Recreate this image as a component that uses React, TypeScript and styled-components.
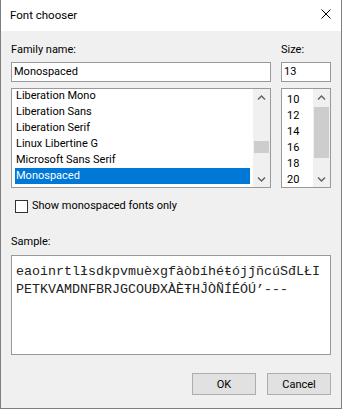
import styled, { createGlobalStyle } from "styled-components";

const families = [
  "Liberation Mono",
  "Liberation Sans",
  "Liberation Serif",
  "Linux Libertine G",
  "Microsoft Sans Serif",
  "Monospaced",
];

const sizes = ["10", "12", "14", "16", "18", "20"];

const GlobalStyle = createGlobalStyle`
  html, body {
    margin: 0;
    padding: 0;
    background: #f0f0f0;
  }
  * {
    box-sizing: border-box;
  }
`;

function Chevron({ down }: { down?: boolean }) {
  return (
    <svg width="9" height="6" viewBox="0 0 9 6">
      <path
        d={down ? "M1 1.5 L4.5 5 L8 1.5" : "M1 4.5 L4.5 1 L8 4.5"}
        fill="none"
        stroke="#606060"
        strokeWidth="1.4"
      />
    </svg>
  );
}

function ScrollBar({ thumbTop, thumbHeight }: { thumbTop: number; thumbHeight: number }) {
  return (
    <Bar>
      <Arrow>
        <Chevron />
      </Arrow>
      <Track>
        <Thumb style={{ top: thumbTop, height: thumbHeight }} />
      </Track>
      <Arrow>
        <Chevron down />
      </Arrow>
    </Bar>
  );
}

export default function App() {
  return (
    <>
      <GlobalStyle />
      <Window>
        <TitleBar>
          <Title>Font chooser</Title>
          <CloseIcon width="10" height="10" viewBox="0 0 10 10">
            <path d="M0.5 0.5 L9.5 9.5 M9.5 0.5 L0.5 9.5" stroke="#000" strokeWidth="1" />
          </CloseIcon>
        </TitleBar>
        <Body>
          <TopGrid>
            <Label>Family name:</Label>
            <Label>Size:</Label>
            <TextBox>Monospaced</TextBox>
            <TextBox>13</TextBox>
            <ListBox>
              <Items>
                {families.map((f) => (
                  <Item key={f} $selected={f === "Monospaced"}>
                    {f}
                  </Item>
                ))}
              </Items>
              <ScrollBar thumbTop={35} thumbHeight={12} />
            </ListBox>
            <ListBox>
              <SizeItems>
                {sizes.map((s) => (
                  <SizeItem key={s}>{s}</SizeItem>
                ))}
              </SizeItems>
              <ScrollBar thumbTop={1} thumbHeight={51} />
            </ListBox>
          </TopGrid>
          <CheckRow>
            <CheckBox />
            <span>Show monospaced fonts only</span>
          </CheckRow>
          <SampleLabel>Sample:</SampleLabel>
          <SampleBox>
            <SampleLine>eaoinrtlłsdkpvmuèxgfàòbíhéŧójĵñcúSđLŁI</SampleLine>
            <SampleLine>PETKVAMDNFBRJGCOUĐXÀÈŦHĴÒÑÍÉÓÚ’---</SampleLine>
          </SampleBox>
          <ButtonRow>
            <Button>OK</Button>
            <Button>Cancel</Button>
          </ButtonRow>
        </Body>
      </Window>
    </>
  );
}

const Window = styled.div`
  width: 342px;
  height: 409px;
  display: flex;
  flex-direction: column;
  background: #f0f0f0;
  border: 1px solid #7f7f7f;
  border-top: none;
  font-family: "Segoe UI", Roboto, "Noto Sans", sans-serif;
  font-size: 11px;
  color: #000;
`;

const TitleBar = styled.div`
  height: 31px;
  flex: none;
  background: #fff;
  display: flex;
  align-items: center;
  justify-content: space-between;
  padding: 0 10px 1px 9px;
`;

const Title = styled.div`
  font-size: 11.5px;
  line-height: 16px;
`;

const CloseIcon = styled.svg`
  display: block;
  margin-bottom: 2px;
`;

const Body = styled.div`
  flex: 1;
  display: flex;
  flex-direction: column;
  padding: 11px 10px 0 10px;
`;

const TopGrid = styled.div`
  display: grid;
  grid-template-columns: 260px 50px;
  column-gap: 10px;
`;

const Label = styled.div`
  height: 16px;
  line-height: 16px;
`;

const TextBox = styled.div`
  margin-top: 4px;
  height: 20px;
  line-height: 18px;
  padding-left: 2px;
  background: #fff;
  border: 1px solid #999;
`;

const ListBox = styled.div`
  margin-top: 6px;
  height: 100px;
  display: flex;
  background: #fff;
  border: 1px solid #999;
  overflow: hidden;
`;

const Items = styled.div`
  flex: 1;
  padding: 0 3px;
  margin-top: -1px;
`;

const Item = styled.div<{ $selected?: boolean }>`
  height: 16px;
  line-height: 16px;
  padding-left: 1px;
  white-space: nowrap;
  background: ${(p) => (p.$selected ? "#0078d7" : "transparent")};
  color: ${(p) => (p.$selected ? "#fff" : "#000")};
`;

const SizeItems = styled.div`
  flex: 1;
  padding: 3px 0 0 5px;
`;

const SizeItem = styled.div`
  height: 16px;
  line-height: 16px;
`;

const Bar = styled.div`
  width: 17px;
  flex: none;
  display: flex;
  flex-direction: column;
  background: #f0f0f0;
`;

const Arrow = styled.div`
  height: 17px;
  flex: none;
  display: flex;
  align-items: center;
  justify-content: center;
`;

const Track = styled.div`
  flex: 1;
  position: relative;
`;

const Thumb = styled.div`
  position: absolute;
  left: 1px;
  right: 1px;
  background: #cdcdcd;
`;

const CheckRow = styled.div`
  margin-top: 11px;
  padding-left: 4px;
  height: 14px;
  display: flex;
  align-items: center;
  gap: 4px;
  line-height: 14px;
`;

const CheckBox = styled.div`
  width: 13px;
  height: 13px;
  background: #fff;
  border: 1px solid #333;
`;

const SampleLabel = styled.div`
  margin-top: 21px;
  height: 16px;
  line-height: 16px;
`;

const SampleBox = styled.div`
  margin-top: 5px;
  height: 100px;
  background: #fff;
  border: 1px solid #999;
  padding: 7px 0 0 4px;
  font-family: "Liberation Mono", "DejaVu Sans Mono", monospace;
  font-size: 13.33px;
  color: #222;
`;

const SampleLine = styled.div`
  height: 18px;
  line-height: 18px;
  white-space: nowrap;
`;

const ButtonRow = styled.div`
  margin-top: 18px;
  display: flex;
  justify-content: flex-end;
  gap: 11px;
`;

const Button = styled.div`
  width: 64px;
  height: 22px;
  display: flex;
  align-items: center;
  justify-content: center;
  background: #e1e1e1;
  border: 1px solid #adadad;
`;
